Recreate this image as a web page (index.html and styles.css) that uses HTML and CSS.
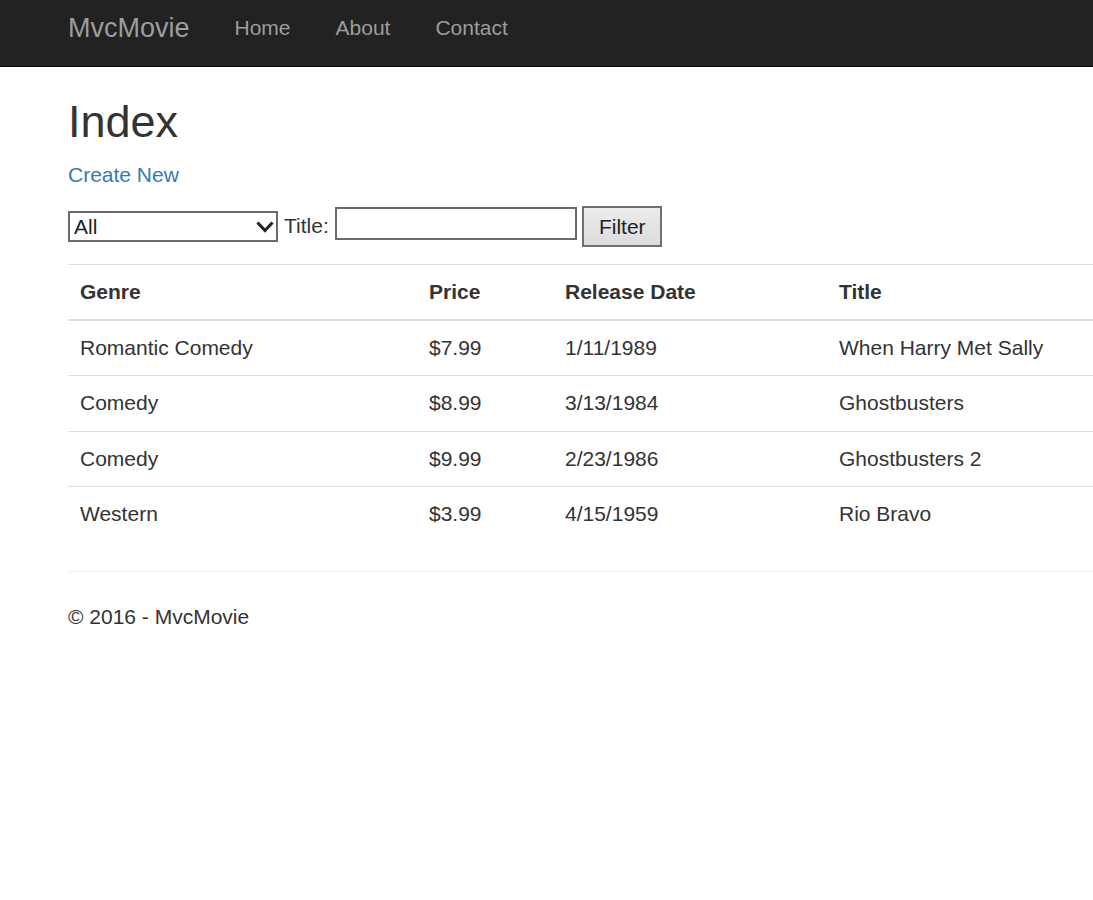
FILE: index.html
```html
<!DOCTYPE html>
<html>
<head>
<meta charset="utf-8">
<title>Index - MvcMovie</title>
<link rel="stylesheet" href="styles.css">
</head>
<body>
<div class="navbar">
  <a class="brand" href="#">MvcMovie</a>
  <a class="nav-link" href="#">Home</a>
  <a class="nav-link" href="#">About</a>
  <a class="nav-link" href="#">Contact</a>
</div>
<div class="main">
  <h2 class="page-title">Index</h2>
  <p class="create"><a href="#">Create New</a></p>
  <form class="filter">
    <span class="select-wrap">
      <select class="genre">
        <option>All</option>
        <option>Comedy</option>
        <option>Romantic Comedy</option>
        <option>Western</option>
      </select>
      <svg class="chev" width="18" height="12" viewBox="0 0 18 12"><path d="M1.5 1.5 L9 9.5 L16.5 1.5" fill="none" stroke="#222" stroke-width="3"/></svg>
    </span>
    <label class="title-label">Title:</label>
    <input class="title-input" type="text">
    <button class="btn" type="button">Filter</button>
  </form>
  <table class="table">
    <colgroup>
      <col class="c1"><col class="c2"><col class="c3"><col class="c4">
    </colgroup>
    <thead>
      <tr><th>Genre</th><th>Price</th><th>Release Date</th><th>Title</th></tr>
    </thead>
    <tbody>
      <tr><td>Romantic Comedy</td><td>$7.99</td><td>1/11/1989</td><td>When Harry Met Sally</td></tr>
      <tr><td>Comedy</td><td>$8.99</td><td>3/13/1984</td><td>Ghostbusters</td></tr>
      <tr><td>Comedy</td><td>$9.99</td><td>2/23/1986</td><td>Ghostbusters 2</td></tr>
      <tr><td>Western</td><td>$3.99</td><td>4/15/1959</td><td>Rio Bravo</td></tr>
    </tbody>
  </table>
  <hr class="rule">
  <footer class="footer"><p>&copy; 2016 - MvcMovie</p></footer>
</div>
</body>
</html>
```
FILE: styles.css
```css
html, body {
  margin: 0;
  padding: 0;
  overflow-x: hidden;
}
body {
  font-family: "Liberation Sans", Arial, sans-serif;
  font-size: 21px;
  line-height: 30px;
  color: #333;
  background: #fff;
  width: 1093px;
}
a {
  color: #337ab7;
  text-decoration: none;
}
.navbar {
  display: flex;
  align-items: flex-start;
  height: 53px;
  padding: 13px 0 0 45.5px;
  background: #222;
  border-bottom: 1px solid #080808;
}
.brand {
  font-size: 27px;
  line-height: 30px;
  color: #9d9d9d;
  padding: 0 22.5px;
}
.nav-link {
  font-size: 21px;
  line-height: 30px;
  color: #9d9d9d;
  padding: 0 22.5px;
}
.main {
  padding: 30px 0 0 68px;
}
.page-title {
  font-size: 45px;
  font-weight: 500;
  line-height: 49.5px;
  margin: 0 0 13.5px;
}
.create {
  margin: 0 0 16px;
}
.filter {
  display: flex;
  align-items: flex-start;
  margin: 0 0 18px;
  height: 40px;
}
.select-wrap {
  position: relative;
  display: block;
  margin-top: 5px;
}
.genre {
  -webkit-appearance: none;
  appearance: none;
  display: block;
  box-sizing: border-box;
  width: 210px;
  height: 31px;
  border: 2px solid #6b6b6b;
  border-radius: 0;
  background: #fff;
  font-family: "Liberation Sans", Arial, sans-serif;
  font-size: 21px;
  color: #222;
  padding: 0 0 0 4px;
  margin: 0;
}
.chev {
  position: absolute;
  right: 4px;
  top: 10px;
  pointer-events: none;
}
.title-label {
  margin: 5px 0 0 6px;
  line-height: 30px;
}
.title-input {
  box-sizing: border-box;
  width: 242px;
  height: 33px;
  margin: 1px 0 0 6.5px;
  border: 2px solid #6b6b6b;
  border-radius: 0;
  padding: 0 4px;
  font-family: "Liberation Sans", Arial, sans-serif;
  font-size: 21px;
}
.btn {
  box-sizing: border-box;
  width: 80px;
  height: 41px;
  margin: 0 0 0 5px;
  border: 2px solid #707070;
  border-radius: 0;
  background: linear-gradient(#ececec, #dcdcdc);
  font-family: "Liberation Sans", Arial, sans-serif;
  font-size: 21px;
  color: #222;
  padding: 0;
}
.table {
  table-layout: fixed;
  border-collapse: collapse;
  border-spacing: 0;
  width: 1090px;
  margin: 0 0 30px;
}
.c1 { width: 349px; }
.c2 { width: 136px; }
.c3 { width: 274px; }
.c4 { width: 331px; }
.table th,
.table td {
  padding: 12px 12px 12.3px;
  line-height: 30px;
  text-align: left;
  vertical-align: top;
  border-top: 1px solid #ddd;
}
.table th {
  padding: 12px;
  font-weight: bold;
  border-bottom: 2px solid #ddd;
}
.table tbody tr:first-child td {
  border-top: 0;
}
.rule {
  margin: 0 0 30px;
  border: 0;
  border-top: 1px solid #eee;
  width: 1100px;
}
.footer p {
  margin: 0 0 15px;
}
```
